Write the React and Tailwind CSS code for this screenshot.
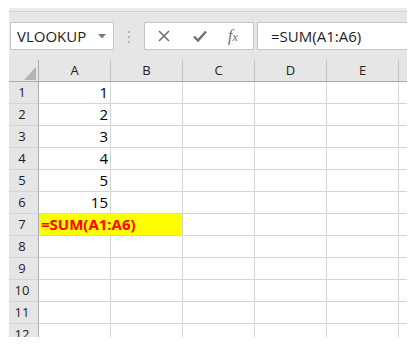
import React from "react";

const font = { fontFamily: '"Open Sans", "Noto Sans", sans-serif' };

const cols = ["A", "B", "C", "D", "E"];
const rows = [
  { n: "1", a: "1" },
  { n: "2", a: "2" },
  { n: "3", a: "3" },
  { n: "4", a: "4" },
  { n: "5", a: "5" },
  { n: "6", a: "15" },
  { n: "7", formula: true },
  { n: "8" },
  { n: "9" },
  { n: "10" },
  { n: "11" },
  { n: "12" },
];

function Row({ r }) {
  return (
    <div className="flex h-[22px]">
      <div className="w-[30px] shrink-0 bg-[#e6e6e6] border-r border-r-[#ababab] border-b border-b-[#d4d4d4] flex items-center justify-center text-[13px] text-[#222] pr-[3px]">
        {r.n}
      </div>
      {r.formula ? (
        <div className="w-[144px] shrink-0 bg-[#ffff00] border-b border-b-[#d4d4d4] border-r border-r-[#d4d4d4] flex items-center pl-[2px] text-[15px] font-bold text-[#ff0000]">
          =SUM(A1:A6)
        </div>
      ) : (
        <>
          <div className="w-[72px] shrink-0 border-r border-b border-[#d4d4d4] flex items-center justify-end pr-[2px] text-[15px] text-black">
            {r.a || ""}
          </div>
          <div className="w-[72px] shrink-0 border-r border-b border-[#d4d4d4]" />
        </>
      )}
      <div className="w-[72px] shrink-0 border-r border-b border-[#d4d4d4]" />
      <div className="w-[72px] shrink-0 border-r border-b border-[#d4d4d4]" />
      <div className="w-[72px] shrink-0 border-r border-b border-[#d4d4d4]" />
      <div className="w-[9px] shrink-0 border-b border-[#d4d4d4]" />
    </div>
  );
}

export default function App() {
  return (
    <div className="w-[418px] h-[358px] bg-white" style={font}>
      <div className="ml-[9px] pt-[8px] w-[398px]">
        <div className="h-[4px] bg-[#ececec] border-b border-[#d0d0d0]" />
        <div className="h-[48px] bg-[#e6e6e6] flex items-start pt-[10px]">
          <div className="ml-[1px] w-[104px] h-[28px] bg-white border border-[#c6c6c6] flex items-center justify-between pl-[6px] pr-[7px]">
            <span className="text-[15px] text-[#222]">VLOOKUP</span>
            <svg width="8" height="5" viewBox="0 0 8 5">
              <path d="M0 0 L8 0 L4 4.5 Z" fill="#7a7a7a" />
            </svg>
          </div>
          <div className="ml-[14px] mt-[9px] flex flex-col gap-[3px]">
            <div className="w-[2px] h-[2px] bg-[#b5b5b5]" />
            <div className="w-[2px] h-[2px] bg-[#b5b5b5]" />
            <div className="w-[2px] h-[2px] bg-[#b5b5b5]" />
          </div>
          <div className="ml-[14px] w-[110px] h-[28px] bg-white border border-[#c6c6c6] flex items-center">
            <svg width="12" height="12" viewBox="0 0 12 12" className="ml-[13px]">
              <path d="M1 1 L11 11 M11 1 L1 11" stroke="#6e6e6e" strokeWidth="1.6" />
            </svg>
            <svg width="14" height="12" viewBox="0 0 14 12" className="ml-[23px]">
              <path d="M1 6.5 L5 10.5 L13 1.5" stroke="#6e6e6e" strokeWidth="2.4" fill="none" />
            </svg>
            <span
              className="ml-[21px] text-[16px] italic text-[#6e6e6e] leading-none"
              style={{ fontFamily: '"Liberation Serif", serif' }}
            >
              f<span className="text-[12px]">x</span>
            </span>
          </div>
          <div className="ml-[3px] flex-1 h-[28px] bg-white border border-r-0 border-[#c6c6c6] flex items-center pl-[13px]">
            <span className="text-[15px] text-[#222]">=SUM(A1:A6)</span>
          </div>
        </div>
        <div className="h-[277px] overflow-hidden">
          <div className="flex h-[22px] bg-[#e6e6e6] border-b border-[#ababab]">
            <div className="w-[30px] shrink-0 border-r border-[#ababab] relative">
              <svg width="12" height="13" viewBox="0 0 12 13" className="absolute left-[15px] top-[7px]">
                <path d="M12 0 L12 13 L0 13 Z" fill="#b4b4b4" />
              </svg>
            </div>
            {cols.map((c) => (
              <div
                key={c}
                className="w-[72px] shrink-0 border-r border-[#c4c4c4] flex items-center justify-center text-[13px] text-[#222]"
              >
                {c}
              </div>
            ))}
            <div className="w-[9px] shrink-0" />
          </div>
          {rows.map((r) => (
            <Row key={r.n} r={r} />
          ))}
        </div>
      </div>
    </div>
  );
}
